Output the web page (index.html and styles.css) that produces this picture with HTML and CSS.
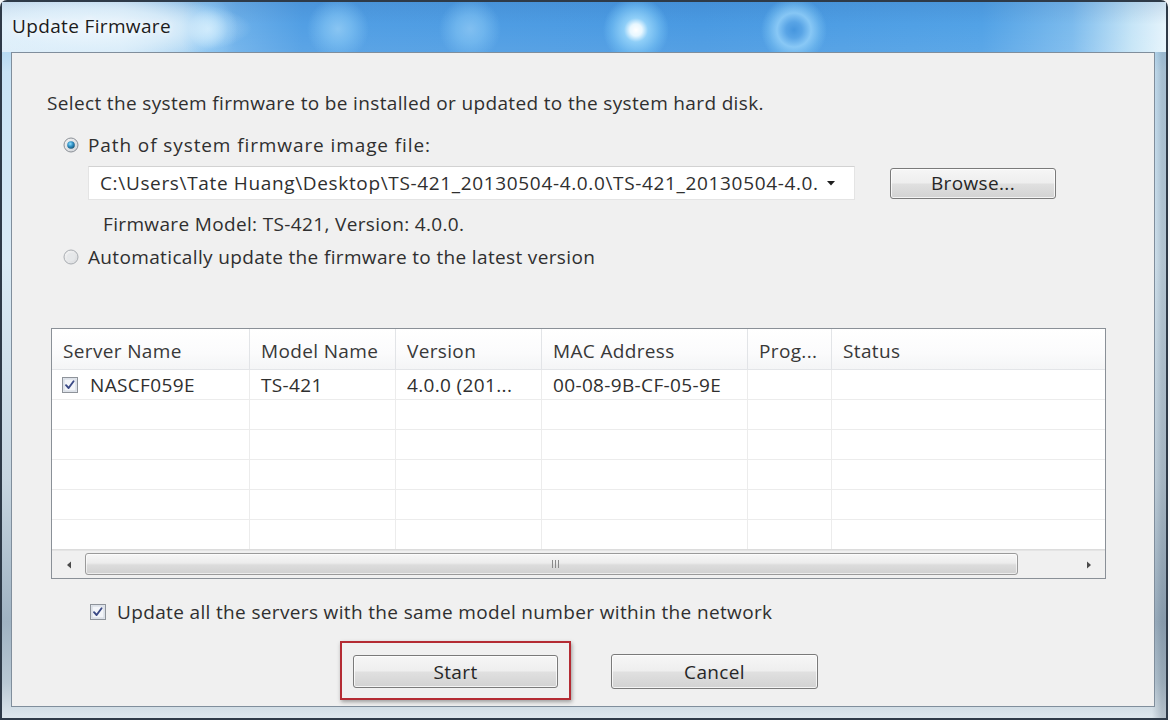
FILE: index.html
```html
<!DOCTYPE html>
<html lang="en">
<head>
<meta charset="utf-8">
<title>Update Firmware</title>
<link rel="stylesheet" href="styles.css">
</head>
<body>
<div class="window">
  <div class="titlebar"><span class="title">Update Firmware</span></div>
  <div class="client">
    <p class="intro">Select the system firmware to be installed or updated to the system hard disk.</p>

    <div class="option">
      <svg class="radio" width="16" height="16" viewBox="0 0 16 16">
        <defs>
          <linearGradient id="rg1" x1="0" y1="0" x2="1" y2="1"><stop offset="0" stop-color="#f4f4f4"/><stop offset="1" stop-color="#cfd3d8"/></linearGradient>
          <radialGradient id="rd1" cx="0.4" cy="0.35" r="0.7"><stop offset="0" stop-color="#8fe0ff"/><stop offset="0.5" stop-color="#2f8fc4"/><stop offset="1" stop-color="#15506f"/></radialGradient>
        </defs>
        <circle cx="8" cy="8" r="7" fill="url(#rg1)" stroke="#8b9097" stroke-width="1"/>
        <circle cx="8" cy="8" r="3.8" fill="url(#rd1)"/>
      </svg>
      <span class="path-label">Path of system firmware image file:</span>
    </div>

    <div class="path-row">
      <div class="combo">
        <span class="combo-text">C:\Users\Tate Huang\Desktop\TS-421_20130504-4.0.0\TS-421_20130504-4.0.</span>
        <svg class="combo-arrow" width="10" height="6" viewBox="0 0 10 6"><path d="M1 1 L9 1 L5 5.5 Z" fill="#1e1e1e"/></svg>
      </div>
      <button class="btn browse">Browse...</button>
    </div>

    <p class="fw-model">Firmware Model: TS-421, Version: 4.0.0.</p>

    <div class="option option-auto">
      <svg class="radio" width="16" height="16" viewBox="0 0 16 16">
        <defs>
          <linearGradient id="rg2" x1="0" y1="0" x2="1" y2="1"><stop offset="0" stop-color="#f6f6f6"/><stop offset="1" stop-color="#d8dadd"/></linearGradient>
        </defs>
        <circle cx="8" cy="8" r="7" fill="url(#rg2)" stroke="#a9adb2" stroke-width="1"/>
        <circle cx="8" cy="8" r="4" fill="#e6e8ea"/>
      </svg>
      <span>Automatically update the firmware to the latest version</span>
    </div>

    <div class="list">
      <div class="list-head">
        <div class="cell">Server Name</div>
        <div class="cell">Model Name</div>
        <div class="cell">Version</div>
        <div class="cell">MAC Address</div>
        <div class="cell">Prog...</div>
        <div class="cell cell-last">Status</div>
      </div>
      <div class="list-row">
        <div class="cell cell-check">
          <svg class="check" width="16" height="16" viewBox="0 0 16 16">
            <rect x="0.5" y="0.5" width="15" height="15" fill="#e9edf4" stroke="#8e939a"/>
            <rect x="2" y="2" width="12" height="12" fill="#f3f5f9" stroke="#c9d0da" stroke-width="0.8"/>
            <path d="M4 8.2 L6.6 11 L11.6 4.2" fill="none" stroke="#3b4a86" stroke-width="1.9" stroke-linecap="round" stroke-linejoin="round"/>
          </svg>
          <span>NASCF059E</span>
        </div>
        <div class="cell">TS-421</div>
        <div class="cell">4.0.0 (201...</div>
        <div class="cell">00-08-9B-CF-05-9E</div>
        <div class="cell"></div>
        <div class="cell cell-last"></div>
      </div>
      <div class="list-row"><div class="cell"></div><div class="cell"></div><div class="cell"></div><div class="cell"></div><div class="cell"></div><div class="cell cell-last"></div></div>
      <div class="list-row"><div class="cell"></div><div class="cell"></div><div class="cell"></div><div class="cell"></div><div class="cell"></div><div class="cell cell-last"></div></div>
      <div class="list-row"><div class="cell"></div><div class="cell"></div><div class="cell"></div><div class="cell"></div><div class="cell"></div><div class="cell cell-last"></div></div>
      <div class="list-row"><div class="cell"></div><div class="cell"></div><div class="cell"></div><div class="cell"></div><div class="cell"></div><div class="cell cell-last"></div></div>
      <div class="list-row list-row-last"><div class="cell"></div><div class="cell"></div><div class="cell"></div><div class="cell"></div><div class="cell"></div><div class="cell cell-last"></div></div>
      <div class="hscroll">
        <div class="sb-arrow"><svg width="6" height="8" viewBox="0 0 6 8"><path d="M5 0.5 L5 7.5 L1 4 Z" fill="#4a4a4a"/></svg></div>
        <div class="sb-thumb">
          <svg width="9" height="8" viewBox="0 0 9 8"><path d="M1.5 0 V8 M4.5 0 V8 M7.5 0 V8" stroke="#8a8a8a" stroke-width="1"/></svg>
        </div>
        <div class="sb-track"></div>
        <div class="sb-arrow"><svg width="6" height="8" viewBox="0 0 6 8"><path d="M1 0.5 L1 7.5 L5 4 Z" fill="#4a4a4a"/></svg></div>
      </div>
    </div>

    <div class="check-row">
      <svg class="check" width="16" height="16" viewBox="0 0 16 16">
        <rect x="0.5" y="0.5" width="15" height="15" fill="#e9edf4" stroke="#8e939a"/>
        <rect x="2" y="2" width="12" height="12" fill="#f3f5f9" stroke="#c9d0da" stroke-width="0.8"/>
        <path d="M4 8.2 L6.6 11 L11.6 4.2" fill="none" stroke="#3b4a86" stroke-width="1.9" stroke-linecap="round" stroke-linejoin="round"/>
      </svg>
      <span>Update all the servers with the same model number within the network</span>
    </div>

    <div class="buttons">
      <div class="highlight"><button class="btn start">Start</button></div>
      <button class="btn cancel">Cancel</button>
    </div>
  </div>
</div>
</body>
</html>
```

FILE: styles.css
```css
* { box-sizing: border-box; }

html, body {
  margin: 0;
  padding: 0;
}

body {
  width: 1170px;
  height: 720px;
  overflow: hidden;
  background: #f4f6f8;
  font-family: "Open Sans", "Noto Sans", sans-serif;
  font-size: 19px;
  letter-spacing: 0.35px;
  color: #2f2f2f;
}

.window {
  width: 1168px;
  height: 720px;
  display: flex;
  flex-direction: column;
  border: 2px solid #2e3a48;
  border-radius: 7px 7px 0 0;
  background:
    linear-gradient(90deg, rgba(40,60,80,0.0) 0, rgba(40,60,80,0.0) 1150px, rgba(60,80,100,0.25) 1160px),
    linear-gradient(180deg, #8cc4ec 0, #c9e3f5 70px, #d9eaf5 260px, #c6d5e0 480px, #9fb2c2 620px, #b8c8d4 680px, #dfe8ee 718px);
}

.titlebar {
  height: 50px;
  flex: none;
  padding: 0 0 2px 10px;
  display: flex;
  align-items: center;
  background:
    radial-gradient(ellipse 160px 34px at 90px 26px, rgba(238,247,253,0.95) 0, rgba(225,241,251,0.75) 55%, rgba(220,238,250,0) 100%),
    radial-gradient(circle at 206px 27px, rgba(200,234,255,0.9) 0, rgba(180,224,252,0.8) 9px, rgba(140,200,245,0.5) 20px, rgba(120,190,240,0) 30px),
    radial-gradient(circle at 336px 27px, rgba(150,206,246,0.8) 0, rgba(130,196,244,0.65) 14px, rgba(120,190,240,0) 31px),
    radial-gradient(circle at 468px 27px, rgba(145,202,245,0.75) 0, rgba(130,196,244,0.6) 14px, rgba(120,190,240,0) 31px),
    radial-gradient(circle at 634px 28px, #ffffff 0, #e8f7ff 6px, rgba(150,212,250,0.9) 12px, rgba(120,195,245,0.55) 24px, rgba(120,190,240,0) 33px),
    radial-gradient(circle at 792px 28px, rgba(70,150,222,1) 0, rgba(90,165,230,0.9) 8px, rgba(150,210,250,0.8) 17px, rgba(130,200,245,0.4) 26px, rgba(120,190,240,0) 33px),
    linear-gradient(180deg, rgba(30,80,150,0.14) 0, rgba(255,255,255,0) 45%, rgba(255,255,255,0.06) 100%),
    linear-gradient(90deg, #dcedf9 0, #d2e8f8 120px, #a6d2f2 180px, #6cb0ea 235px, #529fe4 300px, #4a9ae2 700px, #52a2e6 980px, #7cbbed 1070px, #c6e5f7 1130px, #e6f4fc 1164px);
}

.title {
  font-size: 19px;
  color: #1c1c1c;
  text-shadow: 0 0 6px rgba(255,255,255,0.9), 0 0 12px rgba(255,255,255,0.7);
}

.client {
  flex: 1;
  margin: 0 11px 11px 9px;
  border: 1px solid #808e9c;
  background: #f0f0f0;
  padding-top: 39px;
  display: flex;
  flex-direction: column;
}

.intro {
  margin: 0 0 0 35px;
  line-height: 22px;
}

.option {
  display: flex;
  align-items: center;
  gap: 9px;
  margin: 20px 0 0 51px;
  height: 22px;
  line-height: 22px;
}

.path-label { letter-spacing: 0.9px; }

.option-auto {
  margin-top: 11px;
}

.radio { flex: none; }

.path-row {
  display: flex;
  align-items: center;
  margin: 10px 0 0 76px;
  height: 34px;
}

.combo {
  width: 767px;
  height: 34px;
  background: #ffffff;
  border: 1px solid #e4e4e4;
  border-top-color: #d2d2d2;
  display: flex;
  align-items: center;
  padding: 0 18px 0 11px;
}

.combo-text {
  flex: 1;
  white-space: nowrap;
  overflow: hidden;
  letter-spacing: 0.65px;
}

.combo-arrow { flex: none; margin-left: 6px; }

.btn {
  font-family: inherit;
  font-size: 19px;
  letter-spacing: 0.35px;
  color: #262626;
  border: 1px solid #7a7a7a;
  border-radius: 3px;
  background: linear-gradient(180deg, #f6f6f6 0%, #eeeeee 48%, #e0e0e0 52%, #d2d2d2 100%);
  box-shadow: inset 0 0 0 1px rgba(255,255,255,0.75);
  padding: 0;
  cursor: default;
}

.browse {
  width: 166px;
  height: 31px;
  margin-left: 35px;
}

.fw-model {
  margin: 13px 0 0 91px;
  line-height: 22px;
}

.list {
  margin: 60px 0 0 39px;
  width: 1055px;
  height: 251px;
  border: 1px solid #8a9097;
  background: #ffffff;
  display: flex;
  flex-direction: column;
}

.list-head,
.list-row {
  display: grid;
  grid-template-columns: 198px 146px 146px 206px 84px 1fr;
}

.list-head {
  height: 41px;
  background: linear-gradient(180deg, #ffffff 0, #fbfbfc 60%, #f4f5f6 100%);
  border-bottom: 1px solid #e3e5e8;
}

.list-head .cell {
  border-right: 1px solid #e2e4e7;
  padding: 3px 0 0 11px;
  color: #383838;
}

.list-row {
  height: 30px;
  border-bottom: 1px solid #ececec;
}

.list-row-last { border-bottom: 1px solid #dcdcdc; }

.cell {
  display: flex;
  align-items: center;
  padding-left: 11px;
  border-right: 1px solid #ececec;
  white-space: nowrap;
  overflow: hidden;
}

.cell-last { border-right: none; }

.list-head .cell-last { border-right: none; }

.cell-check {
  padding-left: 10px;
  gap: 12px;
}

.check { flex: none; }

.hscroll {
  flex: 1;
  display: flex;
  align-items: stretch;
  background: #f0f0f0;
  border-top: 1px solid #e4e4e4;
}

.sb-arrow {
  width: 33px;
  flex: none;
  display: flex;
  align-items: center;
  justify-content: center;
}

.sb-thumb {
  width: 933px;
  flex: none;
  margin: 2px 0 3px;
  border: 1px solid #9a9a9a;
  border-radius: 3px;
  background: linear-gradient(180deg, #f7f7f7 0%, #ececec 45%, #dcdcdc 55%, #d0d0d0 100%);
  box-shadow: inset 0 0 0 1px rgba(255,255,255,0.6);
  display: flex;
  align-items: center;
  justify-content: center;
  padding-left: 8px;
}

.sb-track { flex: 1; }

.check-row {
  display: flex;
  align-items: center;
  gap: 11px;
  height: 22px;
  margin: 22px 0 0 78px;
}

.buttons {
  display: flex;
  align-items: flex-start;
  margin: 18px 0 0 328px;
}

.highlight {
  border: 2px solid #b42b33;
  padding: 12px 11px 10px 11px;
  box-shadow: 1px 2px 4px rgba(0,0,0,0.35);
}

.start {
  width: 205px;
  height: 33px;
  display: block;
}

.cancel {
  width: 207px;
  height: 35px;
  margin: 13px 0 0 40px;
}
```
